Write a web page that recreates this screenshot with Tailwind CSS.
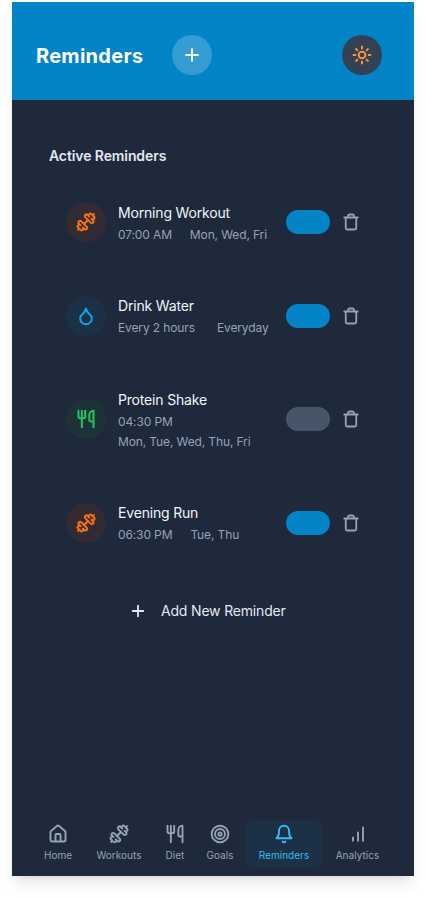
<!DOCTYPE html>
<html lang="en">
<head>
<meta charset="utf-8">
<title>Reminders</title>
<script src="https://cdn.jsdelivr.net/npm/@tailwindcss/browser@4"></script>
</head>
<body class="h-[898px] overflow-hidden bg-white pt-0.5 font-['Inter',sans-serif]">
<svg class="hidden" fill="none">
  <symbol id="dumbbell" viewBox="0 0 24 24"><path d="M17.596 12.768a2 2 0 1 0 2.829-2.829l-1.768-1.767a2 2 0 0 0 2.828-2.829l-2.828-2.828a2 2 0 0 0-2.829 2.828l-1.767-1.768a2 2 0 1 0-2.829 2.829z"/><path d="m2.5 21.5 1.4-1.4M20.1 3.9l1.4-1.4"/><path d="M5.343 21.485a2 2 0 1 0 2.829-2.828l1.767 1.768a2 2 0 1 0 2.829-2.829l-6.364-6.364a2 2 0 1 0-2.829 2.829l1.768 1.767a2 2 0 0 0-2.828 2.829z"/><path d="m9.6 14.4 4.8-4.8"/></symbol>
  <symbol id="utensils" viewBox="0 0 24 24"><path d="M3 2v7c0 1.1.9 2 2 2h4a2 2 0 0 0 2-2V2M7 2v20M21 15V2a5 5 0 0 0-5 5v6c0 1.1.9 2 2 2h3Zm0 0v7"/></symbol>
  <symbol id="trash" viewBox="0 0 24 24"><path d="M3 6h18M19 6v14c0 1-1 2-2 2H7c-1 0-2-1-2-2V6M8 6V4c0-1 1-2 2-2h4c1 0 2 1 2 2v2"/></symbol>
  <symbol id="plus" viewBox="0 0 24 24"><path d="M5 12h14M12 5v14"/></symbol>
</svg>
<main class="ml-3 flex h-[874px] w-[402px] flex-col bg-[#1e293b] shadow-[0_10px_15px_-3px_rgb(0_0_0/0.1),0_4px_6px_-4px_rgb(0_0_0/0.1)]">
  <header class="flex h-[98px] shrink-0 items-center bg-[#0284c7] pt-2 pr-8 pl-6 text-white">
    <h1 class="w-[136px] pt-px text-xl font-bold tracking-[0.28px]">Reminders</h1>
    <button class="flex size-10 items-center justify-center rounded-full bg-white/20"><svg class="size-5 fill-none stroke-current stroke-[2.4] [stroke-linecap:round]"><use href="#plus"/></svg></button>
    <button class="ml-auto flex size-10 items-center justify-center rounded-full bg-[#334155] text-[#fb923c]"><svg viewBox="0 0 24 24" class="size-5 fill-none stroke-current stroke-[2.4]"><circle cx="12" cy="12" r="4"/><path d="M12 1v4M12 19v4M4.220 4.220l2.830 2.830M16.950 16.950l2.830 2.830M1 12h4M19 12h4M7.050 16.950l-2.830 2.830M19.780 4.220l-2.830 2.830"/></svg></button>
  </header>
  <section class="flex flex-col pt-[46px] pr-[52px] pl-[37px]">
    <h2 class="text-sm leading-5 font-semibold tracking-[-0.1px] text-[#e2e8f0]">Active Reminders</h2>
    <ul class="mt-[9.5px] pl-[17px] text-xs leading-4 tracking-[-0.12px] text-[#94a3b8] [&_h3]:tracking-[-0.18px] [&_svg]:fill-none [&_svg]:stroke-current [&_svg]:stroke-[2.4] [&_svg]:[stroke-linecap:round] [&_svg]:[stroke-linejoin:round]">
      <li class="flex h-[93px] items-center">
        <div class="flex size-10 shrink-0 items-center justify-center rounded-full bg-[#322b33] text-[#f97316]"><svg class="size-5"><use href="#dumbbell"/></svg></div>
        <div class="ml-3 w-[168px] pt-0.5 whitespace-nowrap"><h3 class="text-sm leading-5 text-[#f1f5f9]">Morning Workout</h3><p class="mt-1 flex gap-[18px]"><span>07:00 AM</span><span>Mon, Wed, Fri</span></p></div>
        <button class="h-6 w-11 shrink-0 rounded-full bg-[#0284c7]"></button>
        <button class="ml-3 shrink-0"><svg class="size-[18px]"><use href="#trash"/></svg></button>
      </li>
      <li class="flex h-[94px] items-center">
        <div class="flex size-10 shrink-0 items-center justify-center rounded-full bg-[#1c3145] text-[#0ea5e9]"><svg viewBox="0 0 24 24" class="size-5"><path d="M12 22a7 7 0 0 0 7-7c0-2-1-3.900-3-5.500s-3.500-4-4-6.500c-.5 2.500-2 4.900-4 6.500C6 11.100 5 13 5 15a7 7 0 0 0 7 7z"/></svg></div>
        <div class="ml-3 w-[168px] pt-px whitespace-nowrap"><h3 class="text-sm leading-5 text-[#f1f5f9]">Drink Water</h3><p class="mt-1 flex gap-[22px]"><span>Every 2 hours</span><span>Everyday</span></p></div>
        <button class="h-6 w-11 shrink-0 rounded-full bg-[#0284c7]"></button>
        <button class="ml-3 shrink-0"><svg class="size-[18px]"><use href="#trash"/></svg></button>
      </li>
      <li class="flex h-[113px] items-center">
        <div class="flex size-10 shrink-0 items-center justify-center rounded-full bg-[#1e3339] text-[#22c55e]"><svg class="size-5"><use href="#utensils"/></svg></div>
        <div class="ml-3 w-[168px] pt-0.5 whitespace-nowrap"><h3 class="text-sm leading-5 text-[#f1f5f9]">Protein Shake</h3><p class="mt-1 flex flex-col gap-1"><span>04:30 PM</span><span>Mon, Tue, Wed, Thu, Fri</span></p></div>
        <button class="h-6 w-11 shrink-0 rounded-full bg-[#475569]"></button>
        <button class="ml-3 shrink-0"><svg class="size-[18px]"><use href="#trash"/></svg></button>
      </li>
      <li class="flex h-[94px] items-center">
        <div class="flex size-10 shrink-0 items-center justify-center rounded-full bg-[#322b33] text-[#f97316]"><svg class="size-5"><use href="#dumbbell"/></svg></div>
        <div class="ml-3 w-[168px] pt-px whitespace-nowrap"><h3 class="text-sm leading-5 text-[#f1f5f9]">Evening Run</h3><p class="mt-1 flex gap-[18px]"><span>06:30 PM</span><span>Tue, Thu</span></p></div>
        <button class="h-6 w-11 shrink-0 rounded-full bg-[#0284c7]"></button>
        <button class="ml-3 shrink-0"><svg class="size-[18px]"><use href="#trash"/></svg></button>
      </li>
    </ul>
    <button class="mt-[31.5px] ml-20 flex h-5 items-center gap-[14px] text-sm tracking-[-0.18px] text-[#e2e8f0]"><svg class="size-[18px] fill-none stroke-current stroke-[2.4] [stroke-linecap:round]"><use href="#plus"/></svg>Add New Reminder</button>
  </section>
  <nav class="mt-auto mb-2 flex h-12 justify-between pr-[21px] pl-5 text-[10px] leading-[15px] tracking-[0.03px] text-[#94a3b8] [&>a]:flex [&>a]:flex-col [&>a]:items-center [&>a]:gap-1 [&>a]:pt-1 [&_svg]:size-5 [&_svg]:fill-none [&_svg]:stroke-current [&_svg]:stroke-[2.3] [&_svg]:[stroke-linecap:round] [&_svg]:[stroke-linejoin:round]">
    <a class="w-[52px]"><svg viewBox="0 0 24 24"><path d="M15 21v-8a1 1 0 0 0-1-1h-4a1 1 0 0 0-1 1v8M3 10a2 2 0 0 1 .709-1.528l7-5.999a2 2 0 0 1 2.582 0l7 5.999A2 2 0 0 1 21 10v9a2 2 0 0 1-2 2H5a2 2 0 0 1-2-2z"/></svg>Home</a>
    <a class="w-[70px]"><svg><use href="#dumbbell"/></svg>Workouts</a>
    <a class="w-[42px]"><svg><use href="#utensils"/></svg>Diet</a>
    <a class="mr-0.5 w-12"><svg viewBox="0 0 24 24"><circle cx="12" cy="12" r="10"/><circle cx="12" cy="12" r="6"/><circle cx="12" cy="12" r="2"/></svg>Goals</a>
    <a class="w-[76px] rounded-lg bg-[#1c3145] text-[#38bdf8]"><svg viewBox="0 0 24 24"><path d="M6 8a6 6 0 0 1 12 0c0 7 3 9 3 9H3s3-2 3-9M10.300 21a1.940 1.940 0 0 0 3.400 0"/></svg>Reminders</a>
    <a class="w-[71px]"><svg viewBox="0 0 24 24"><path d="M12 20V10M18 20V4M6 20v-4"/></svg>Analytics</a>
  </nav>
</main>
</body>
</html>
